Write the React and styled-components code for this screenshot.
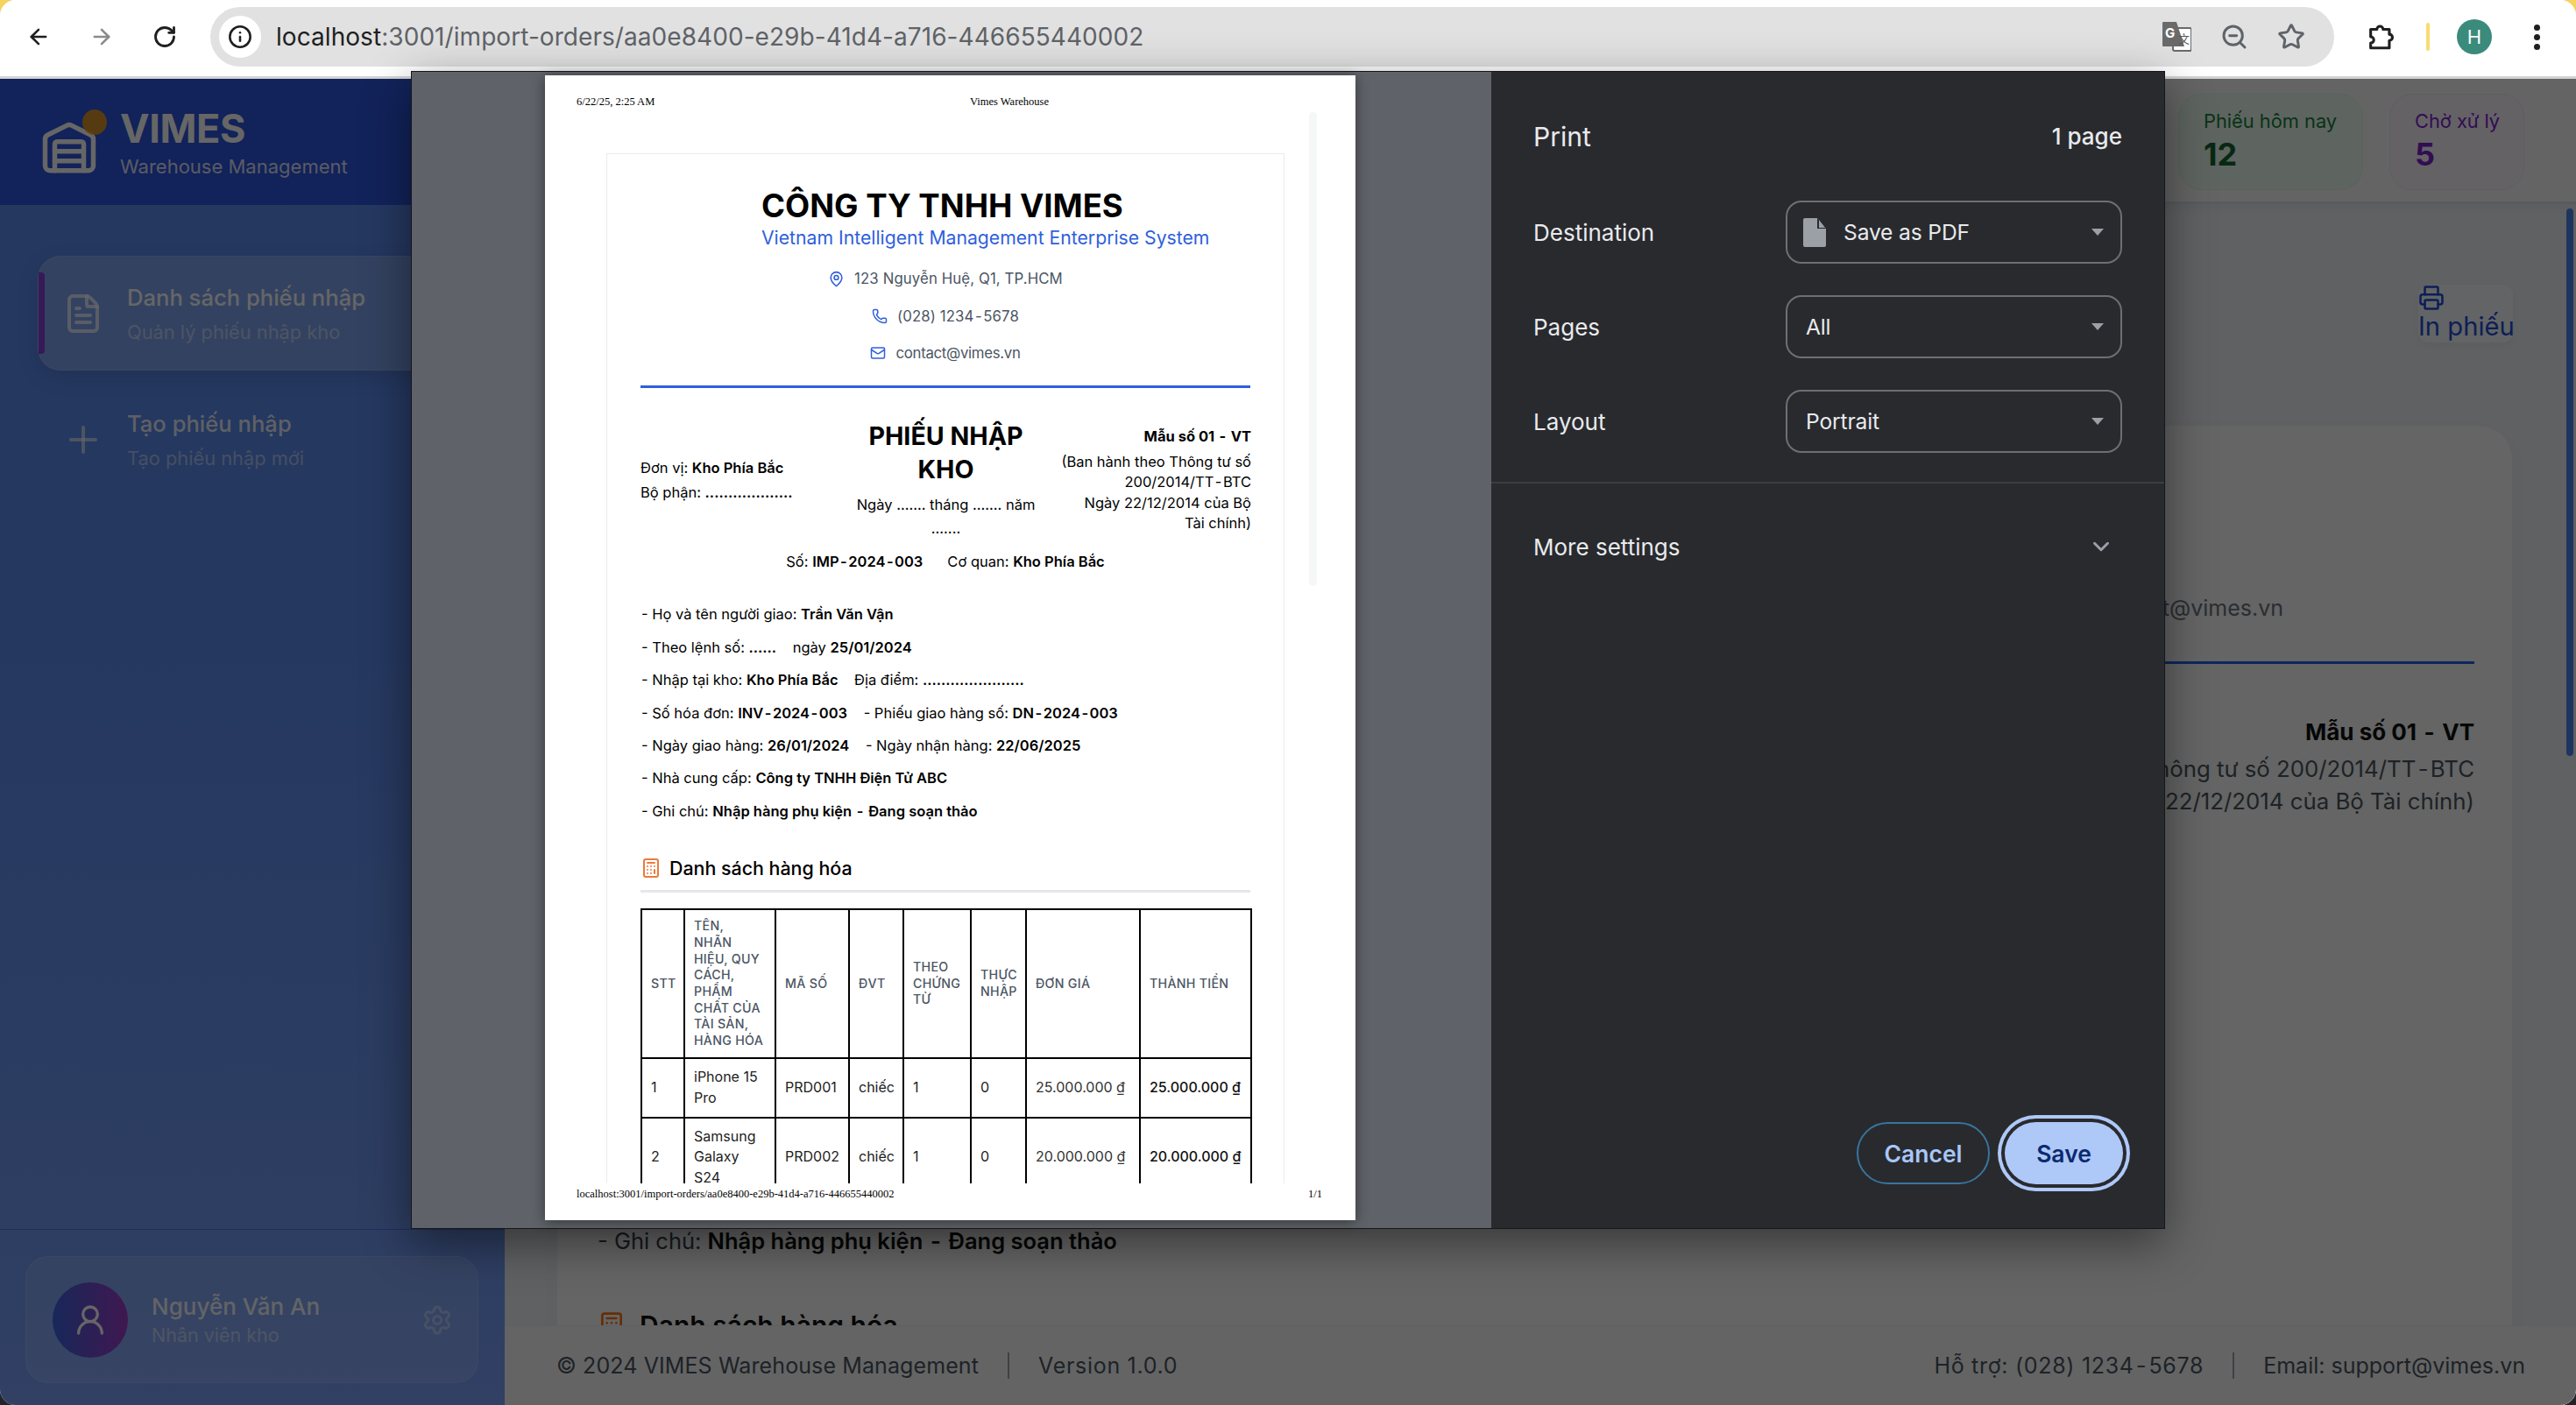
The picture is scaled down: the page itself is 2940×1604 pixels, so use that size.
import React from 'react';
import styled, { createGlobalStyle } from 'styled-components';
import { ArrowLeft, ArrowRight, RotateCw, Info, ZoomOut, Star, Warehouse, FileText, Plus, UserRound, Settings, Printer, MapPin, Phone, Mail, Calculator, ChevronDown } from 'lucide-react';

const Global = createGlobalStyle`
  html, body { margin: 0; padding: 0; background: linear-gradient(180deg, #f4d35e 0 50%, #23242a 50% 100%); }
  * { box-sizing: border-box; }
  body { font-family: Inter, "Noto Sans", sans-serif; }
`;

const Window = styled.div`
  position: relative; width: 2940px; height: 1604px; display: flex; flex-direction: column;
  overflow: hidden; border-radius: 18px; background: #fff;
`;

/* browser toolbar */
const BrowserBar = styled.header`
  height: 90px; flex: none; display: flex; align-items: flex-start; padding-top: 8px;
  background: #fff; border-bottom: 3px solid #d4d4d4;
`;
const NavIcons = styled.div`
  width: 240px; height: 68px; flex: none; display: flex; align-items: center; padding-left: 30px; gap: 44px;
  color: #1f1f1f;
`;
const Omnibox = styled.div`
  width: 2424px; height: 68px; flex: none; display: flex; align-items: center; padding-left: 10px;
  background: #e1e1e1; border-radius: 34px;
`;
const InfoDot = styled.span`
  width: 48px; height: 48px; border-radius: 50%; background: #fff; display: flex; align-items: center; justify-content: center; color: #1f1f1f; flex: none;
`;
const UrlText = styled.div`
  margin-left: 17px; font-size: 28px; color: #5f6368; letter-spacing: 0.06px; white-space: nowrap; flex: 1;
  b { font-weight: 400; color: #1f1f1f; }
`;
const OmniIcons = styled.div`
  display: flex; align-items: center; gap: 33px; padding-right: 33px; color: #5f6368;
`;
const ToolIcons = styled.div`
  flex: 1; height: 68px; display: flex; align-items: center; padding-left: 36px;
`;
const Divider = styled.span`
  width: 4px; height: 32px; background: #f8dc70; margin: 0 31px 0 35px; border-radius: 2px;
`;
const Profile = styled.span`
  width: 40px; height: 40px; border-radius: 50%; background: #3b8b7c; color: #fff; font-size: 22px;
  display: flex; align-items: center; justify-content: center;
`;
const Kebab = styled.span`
  margin-left: 48px; display: flex; flex-direction: column; gap: 4px;
  i { width: 7px; height: 7px; border-radius: 50%; background: #1f1f1f; display: block; }
`;

/* dimmed page */
const Viewport = styled.div`
  position: relative; flex: 1; display: flex; min-height: 0;
`;
const Scrim = styled.div`
  position: absolute; inset: 0; background: rgba(0,0,0,.6);
`;
const Sidebar = styled.aside`
  width: 576px; flex: none; display: flex; flex-direction: column;
  background: linear-gradient(180deg, #5c8cf0 0%, #5c8cf0 40%, #7aa0f8 100%);
`;
const Brand = styled.div`
  height: 144px; flex: none; display: flex; align-items: center; gap: 25px; padding: 0 0 4px 46px;
  background: linear-gradient(90deg, #2d55e0, #2e58e4); color: #fff;
`;
const LogoWrap = styled.div`
  position: relative; width: 66px; height: 62px; margin-top: 20px; flex: none; display: flex; align-items: center; justify-content: center;
`;
const LogoDot = styled.span`
  position: absolute; left: 48px; top: -14px; width: 28px; height: 29px; border-radius: 50%; background: #f59e0b; opacity: .85;
`;
const BrandName = styled.div`
  font-size: 45px; font-weight: 700; line-height: 60px; letter-spacing: -0.4px;
`;
const BrandSub = styled.div`
  font-size: 22px; line-height: 26px; color: rgba(255,255,255,.85);
`;
const Nav = styled.nav`
  padding: 58px 0 0 43px; display: flex; flex-direction: column; gap: 13px;
`;
const NavItem = styled.div`
  position: relative; width: 490px; height: 131px; display: flex; align-items: center; gap: 26px; padding-left: 27px;
  border-radius: 26px; color: #fff;
  background: ${p => p.$active ? 'rgba(255,255,255,.22)' : 'transparent'};
  border: ${p => p.$active ? '1px solid rgba(255,255,255,.15)' : '1px solid transparent'};
  box-shadow: ${p => p.$active ? '0 8px 24px rgba(0,0,0,.12)' : 'none'};
  ${p => p.$active ? `&::before { content: ''; position: absolute; left: 0; top: 18px; bottom: 18px; width: 7px; background: #8b3fd8; border-radius: 0 4px 4px 0; }` : ''}
  svg { color: rgba(255,255,255,${p => p.$active ? '.75' : '.6'}); flex: none; }
`;
const NavTitle = styled.div`
  font-size: 25.6px; font-weight: 500; line-height: 36px; color: ${p => p.$active ? '#fff' : 'rgba(255,255,255,.9)'};
`;
const NavSub = styled.div`
  font-size: 21.8px; line-height: 30px; margin-top: 6px; color: rgba(255,255,255,.5);
`;
const UserBlock = styled.div`
  margin-top: auto; height: 201px; padding: 30px 30px 0 29px; border-top: 1px solid rgba(40,80,220,.5);
`;
const UserCard = styled.div`
  height: 145px; display: flex; align-items: center; padding: 0 30px; gap: 27px;
  background: rgba(255,255,255,.12); border: 1px solid rgba(255,255,255,.12); border-radius: 26px; color: #fff;
`;
const Avatar = styled.div`
  width: 86px; height: 86px; border-radius: 50%; background: linear-gradient(90deg, #3b63e0, #a03cc8); display: flex; align-items: center; justify-content: center; flex: none;
`;
const UserName = styled.div`font-size: 26px; font-weight: 500; line-height: 34px; color: rgba(255,255,255,.95);`;
const UserRole = styled.div`font-size: 21.5px; line-height: 28px; margin-top: 1px; color: rgba(255,255,255,.5);`;
const Gear = styled.div`margin-left: auto; margin-right: -2px; color: rgba(255,255,255,.35); display: flex;`;

const Main = styled.main`
  flex: 1; min-width: 0; display: flex; flex-direction: column; background: #f1f3f8;
`;
const TopBar = styled.div`
  height: 143px; flex: none; display: flex; justify-content: flex-end; gap: 30px; padding: 17px 59px 0 0;
  background: #fbfbfb; border-bottom: 3px solid #dfe4ee; box-shadow: 0 4px 12px rgba(0,0,0,.06); position: relative;
`;
const Stat = styled.div`
  width: ${p => p.$w}px; height: 110px; padding: 16px 0 0 28px; border-radius: 26px;
  background: ${p => p.$bg}; border: 1px solid ${p => p.$bd};
`;
const StatLabel = styled.div`font-size: 21.8px; line-height: 28px; white-space: nowrap; color: ${p => p.$c};`;
const StatValue = styled.div`font-size: 36px; font-weight: 700; line-height: 44px; margin-top: 2px; color: ${p => p.$c};`;

const Body = styled.div`
  flex: 1; min-height: 0; overflow: hidden; position: relative; padding: 92px 72px 0 59px; display: flex; flex-direction: column;
`;
const ScrollThumb = styled.span`
  position: absolute; right: 3px; top: 5px; width: 8px; height: 625px; border-radius: 4px; background: #4b86f0;
`;
const PrintBtn = styled.div`
  align-self: flex-end; width: 108px; height: 71px; margin-bottom: 94px; border-radius: 12px; background: rgba(255,255,255,.5); color: #1d4ed8;
  box-shadow: 0 4px 12px rgba(0,0,0,.05);
  font-size: 29.2px; line-height: 36px; white-space: nowrap;
  svg { display: block; }
`;
const DocCard = styled.section`
  flex: 1; background: #fbfdfb; border: 1px solid #eef0f4; border-radius: 40px 40px 0 0; padding: 0 43px 0 46px; box-shadow: 0 8px 30px rgba(0,0,0,.04);
`;
const ContactBg = styled.div`
  text-align: right; padding: 192px 218px 0 0; font-size: 25px; line-height: 32px; color: #6b7280;
`;
const RuleBg = styled.div`height: 3px; margin-top: 45px; background: #2563eb;`;
const FormBg = styled.div`
  text-align: right; margin-top: 55px; font-size: 25.8px; line-height: 37px; color: #4b5563;
  b { display: block; font-size: 26px; color: #111; line-height: 46px; }
`;
const NoteBg = styled.div`
  margin-top: 467px; font-size: 25.5px; line-height: 34px; color: #374151;
  b { color: #111; font-weight: 600; }
`;
const SectionBg = styled.div`
  margin-top: 61px; display: flex; align-items: center; gap: 16px; font-size: 30px; font-weight: 600; color: #111;
  svg { color: #f97316; flex: none; }
`;
const Foot = styled.footer`
  height: 91px; flex: none; display: flex; align-items: center; padding: 0 58px 0 59px; background: #fbfbfa; border-top: 1px solid #eef0f3;
  font-size: 25px; color: #4b5563; position: relative;
`;
const FootText = styled.span`letter-spacing: ${p => p.$ls || 0}px;`;
const FootSep = styled.span`width: 2px; height: 30px; background: #9ca3af; margin: 0 33px;`;
const FootRight = styled.div`margin-left: auto; display: flex; align-items: center;`;
const Hy = styled.span`margin: 0 .09em;`;

/* print dialog */
const Dialog = styled.div`
  position: absolute; left: 469px; top: 81px; width: 2002px; height: 1322px; display: flex;
  border: 1px solid #16171a; background: #5f6368; box-shadow: 0 16px 50px rgba(0,0,0,.45);
`;
const Preview = styled.div`
  width: 1232px; flex: none; padding: 4px 0 0 152px; background: #5f6268;
`;
const Paper = styled.div`
  width: 925px; height: 1307px; background: #fff; display: flex; flex-direction: column; box-shadow: 0 2px 14px rgba(0,0,0,.45);
`;
const PrintHead = styled.div`
  height: 42px; flex: none; display: flex; align-items: flex-end; padding: 0 0 4px 36px;
  font-family: "Liberation Serif", serif; font-size: 12.5px; color: #000;
  span:first-child { width: 449px; }
`;
const PaperBody = styled.div`
  position: relative; height: 1223px; flex: none; overflow: hidden; padding: 47px 0 0 70px;
`;
const PaperScroll = styled.span`
  position: absolute; left: 872px; top: 0; width: 9px; height: 541px; border-radius: 5px; background: #f6f7f9;
`;
const Frame = styled.div`
  width: 774px; min-height: 1300px; border: 1.5px solid #e9ebee; border-bottom: 0; padding: 0 38px;
  color: #000; font-size: 16.5px;
`;
const CoName = styled.div`
  padding: 37px 0 0 138px; font-size: 36.6px; font-weight: 700; line-height: 44px; white-space: nowrap;
`;
const CoSub = styled.div`
  padding-left: 138px; font-size: 21.2px; line-height: 28px; color: #2f5fdc; white-space: nowrap;
`;
const Contacts = styled.div`
  margin-top: 22px; display: flex; flex-direction: column; gap: 20.5px; align-items: center; color: #4b5563; font-size: 16.8px;
`;
const ContactRow = styled.div`
  height: 22px; display: flex; align-items: center; gap: 11px; letter-spacing: ${p => p.$ls ?? 0.1}px;
  svg { color: #2f5fdc; flex: none; }
`;
const BlueRule = styled.div`height: 3.4px; margin-top: 26px; background: #2f5fdc;`;
const FormGrid = styled.div`
  margin-top: 36px; display: grid; grid-template-columns: 232px 233px 232px; align-items: center;
`;
const FormLeft = styled.div`
  line-height: 28px; b { font-weight: 600; }
`;
const FormCenter = styled.div`
  text-align: center;
`;
const FormTitle = styled.div`font-size: 28.6px; font-weight: 700; line-height: 38px;`;
const FormDate = styled.div`margin-top: 8px; line-height: 27px;`;
const FormRight = styled.div`
  text-align: right; line-height: 23.4px; white-space: nowrap;
  b { display: block; font-weight: 700; margin-bottom: 5px; font-size: 16.5px; }
`;
const RefRow = styled.div`
  margin-top: 12px; display: flex; justify-content: center; gap: 28px; line-height: 24px;
  b { font-weight: 600; }
`;
const InfoList = styled.div`
  margin-top: 36px; display: flex; flex-direction: column; gap: 13.4px; padding-left: 1px; line-height: 24px;
  b { font-weight: 600; }
`;
const SectionTitle = styled.div`
  margin-top: 39px; display: flex; align-items: center; gap: 9px; height: 28px; font-size: 21.4px; font-weight: 500;
  svg { color: #ea7a3c; flex: none; }
`;
const GrayRule = styled.div`height: 3px; margin-top: 11px; background: #e5e7eb;`;
const GoodsTable = styled.table`
  margin-top: 18px; width: 696px; table-layout: fixed; border-collapse: collapse; border: 2px solid #000;
  th, td { border: 2px solid #000; text-align: left; vertical-align: middle; white-space: pre-line; }
  th { font-size: 14.2px; font-weight: 500; line-height: 18.65px; color: #4b5563; padding: 9.5px 2px 9.5px 10px; letter-spacing: 0.3px; }
  td { font-size: 16px; line-height: 23.3px; color: #222; padding: 9.5px 2px 9.5px 10px; }
  td.money { white-space: nowrap; color: #333; }
  td.strong { font-weight: 500; color: #111; }
`;
const PrintFoot = styled.div`
  flex: 1; display: flex; justify-content: space-between; padding: 5px 38px 0 36px;
  font-family: "Liberation Serif", serif; font-size: 12.5px; color: #000;
`;
const Panel = styled.div`
  flex: 1; display: flex; flex-direction: column; background: #292a2e; color: #e8eaed; font-size: 26px; position: relative;
`;
const PanelHead = styled.div`
  height: 147px; flex: none; display: flex; justify-content: space-between; align-items: center; padding: 0 48px;
`;
const PanelTitle = styled.div`font-size: 30px;`;
const PageCount = styled.div`font-weight: 500; font-size: 26px;`;
const Settings2 = styled.div`
  padding: 0 48px; display: flex; flex-direction: column; gap: 36px;
`;
const Row = styled.div`display: flex; align-items: center; justify-content: space-between;`;
const Select = styled.div`
  width: 384px; height: 72px; display: flex; align-items: center; padding: 0 19px 0 21px; border: 2px solid #6d6f73; border-radius: 18px; font-size: 24.6px; letter-spacing: -0.15px;
  &::after { content: ''; margin-left: auto; border-left: 7px solid transparent; border-right: 7px solid transparent; border-top: 8px solid #9aa0a6; }
  svg { margin-right: 20px; margin-left: -3px; }
`;
const PanelRule = styled.div`height: 2px; margin-top: 33px; background: #3c3d41;`;
const More = styled.div`
  height: 144px; display: flex; align-items: center; justify-content: space-between; padding: 0 48px;
  svg { color: #9aa0a6; margin-right: 9px; }
`;
const Actions = styled.div`
  margin-top: auto; margin-bottom: 50px; padding-right: 47px; display: flex; justify-content: flex-end; gap: 17px;
`;
const Btn = styled.div`
  height: 71px; width: ${p => p.$w}px; display: flex; align-items: center; justify-content: center; border-radius: 36px; font-size: 26.5px; font-weight: 600;
  color: ${p => p.$primary ? '#0b2a6e' : '#a8c7fa'};
  background: ${p => p.$primary ? '#aec8f8' : 'transparent'};
  border: ${p => p.$primary ? 'none' : '2px solid #38759f'};
  box-shadow: ${p => p.$primary ? '0 0 0 4px #292a2e, 0 0 0 8px #aec8f8' : 'none'};
`;

const PuzzleIcon = () => (
  <svg width="34" height="36" viewBox="0 0 24 24" fill="none" stroke="#1f1f1f" strokeWidth="2.2" strokeLinejoin="round">
    <path d="M4 6h5a2.5 2.5 0 0 1 5 0h5v4a2.5 2.5 0 0 1 0 5v6H4v-4a2.5 2.5 0 0 0 0-5V6z" />
  </svg>
);
const TranslateIcon = () => (
  <svg width="33" height="34" viewBox="0 0 33 34">
    <rect x="12" y="7" width="21" height="26" rx="2" fill="#fff" stroke="#6a6a6a" strokeWidth="2" />
    <path d="M1 0h15l9 28H1a1 1 0 0 1-1-1V1a1 1 0 0 1 1-1z" fill="#6a6a6a" />
    <text x="3" y="18" fontFamily="Inter, sans-serif" fontSize="15" fontWeight="700" fill="#fff">G</text>
    <text x="18" y="24" fontFamily="'Noto Sans CJK SC', sans-serif" fontSize="13" fill="#5a5a5a">文</text>
  </svg>
);
const DocGlyph = () => (
  <svg width="26" height="33" viewBox="0 0 26 33"><path d="M2 0h14l10 12v19a2 2 0 0 1-2 2H2a2 2 0 0 1-2-2V2a2 2 0 0 1 2-2z" fill="#9aa0a6" /><path d="M16 0l10 12H16z" fill="#292a2e" /><path d="M18 2l7 9h-7z" fill="#9aa0a6" /></svg>
);

/* the reference's font sets hyphens wider than Inter does */
const Sp = ({ t }) => t.split('-').map((part, i) => (
  <React.Fragment key={i}>{i > 0 && <Hy>-</Hy>}{part}</React.Fragment>
));

const headers = ['STT', 'TÊN,\nNHÃN\nHIỆU, QUY\nCÁCH,\nPHẨM\nCHẤT CỦA\nTÀI SẢN,\nHÀNG HÓA', 'MÃ SỐ', 'ĐVT', 'THEO\nCHỨNG\nTỪ', 'THỰC\nNHẬP', 'ĐƠN GIÁ', 'THÀNH TIỀN'];
const widths = [49, 104, 84, 62, 77, 63, 130, 127];
const items = [
  ['1', 'iPhone 15\nPro', 'PRD001', 'chiếc', '1', '0', '25.000.000 ₫', '25.000.000 ₫'],
  ['2', 'Samsung\nGalaxy\nS24', 'PRD002', 'chiếc', '1', '0', '20.000.000 ₫', '20.000.000 ₫'],
];

export default function App() {
  return (
    <>
      <Global />
      <Window>
        <BrowserBar>
          <NavIcons>
            <ArrowLeft size={28} strokeWidth={2.2} />
            <ArrowRight size={28} strokeWidth={2.2} color="#8a8a8a" />
            <RotateCw size={28} strokeWidth={2.4} />
          </NavIcons>
          <Omnibox>
            <InfoDot><Info size={28} strokeWidth={2.2} /></InfoDot>
            <UrlText><b>localhost</b>:3001/import-orders/aa0e8400-e29b-41d4-a716-446655440002</UrlText>
            <OmniIcons>
              <TranslateIcon />
              <ZoomOut size={32} strokeWidth={2.2} />
              <Star size={32} strokeWidth={2.2} />
            </OmniIcons>
          </Omnibox>
          <ToolIcons>
            <PuzzleIcon />
            <Divider />
            <Profile>H</Profile>
            <Kebab><i /><i /><i /></Kebab>
          </ToolIcons>
        </BrowserBar>

        <Viewport>
          <Sidebar>
            <Brand>
              <LogoWrap><Warehouse size={76} strokeWidth={2} /><LogoDot /></LogoWrap>
              <div>
                <BrandName>VIMES</BrandName>
                <BrandSub>Warehouse Management</BrandSub>
              </div>
            </Brand>
            <Nav>
              <NavItem $active>
                <FileText size={48} strokeWidth={2} />
                <div>
                  <NavTitle $active>Danh sách phiếu nhập</NavTitle>
                  <NavSub>Quản lý phiếu nhập kho</NavSub>
                </div>
              </NavItem>
              <NavItem>
                <Plus size={48} strokeWidth={2} />
                <div>
                  <NavTitle>Tạo phiếu nhập</NavTitle>
                  <NavSub>Tạo phiếu nhập mới</NavSub>
                </div>
              </NavItem>
            </Nav>
            <UserBlock>
              <UserCard>
                <Avatar><UserRound size={40} color="#fff" strokeWidth={2} /></Avatar>
                <div>
                  <UserName>Nguyễn Văn An</UserName>
                  <UserRole>Nhân viên kho</UserRole>
                </div>
                <Gear><Settings size={36} strokeWidth={2} /></Gear>
              </UserCard>
            </UserBlock>
          </Sidebar>
          <Main>
            <TopBar>
              <Stat $w={211} $bg="#ecfbef" $bd="#dcf5e2">
                <StatLabel $c="#16803c">Phiếu hôm nay</StatLabel>
                <StatValue $c="#166534">12</StatValue>
              </Stat>
              <Stat $w={154} $bg="#faf5fc" $bd="#f1e6f8">
                <StatLabel $c="#7e22ce">Chờ xử lý</StatLabel>
                <StatValue $c="#7e22ce">5</StatValue>
              </Stat>
            </TopBar>
            <Body>
              <ScrollThumb />
              <PrintBtn>
                <Printer size={30} strokeWidth={2} />
                In phiếu
              </PrintBtn>
              <DocCard>
                <ContactBg>contact@vimes.vn</ContactBg>
                <RuleBg />
                <FormBg>
                  <b><Sp t="Mẫu số 01 - VT" /></b>
                  (Ban hành theo Thông tư số <Sp t="200/2014/TT-BTC" />
                  <br />
                  Ngày 22/12/2014 của Bộ Tài chính)
                </FormBg>
                <NoteBg>- Ghi chú: <b><Sp t="Nhập hàng phụ kiện - Đang soạn thảo" /></b></NoteBg>
                <SectionBg><Calculator size={32} strokeWidth={2} />Danh sách hàng hóa</SectionBg>
              </DocCard>
            </Body>
            <Foot>
              <FootText $ls={0.1}>© 2024 VIMES Warehouse Management</FootText>
              <FootSep />
              <FootText $ls={0.7}>Version 1.0.0</FootText>
              <FootRight>
                <FootText $ls={0.7}>Hỗ trợ: (028) <Sp t="1234-5678" /></FootText>
                <FootSep />
                <FootText>Email: support@vimes.vn</FootText>
              </FootRight>
            </Foot>
          </Main>
          <Scrim />
        </Viewport>

        <Dialog>
          <Preview>
            <Paper>
              <PrintHead><span>6/22/25, 2:25 AM</span><span>Vimes Warehouse</span></PrintHead>
              <PaperBody>
                <PaperScroll />
                <Frame>
                  <CoName>CÔNG TY TNHH VIMES</CoName>
                  <CoSub>Vietnam Intelligent Management Enterprise System</CoSub>
                  <Contacts>
                    <ContactRow><MapPin size={19} strokeWidth={2} />123 Nguyễn Huệ, Q1, TP.HCM</ContactRow>
                    <ContactRow><Phone size={18} strokeWidth={2} /><span>(028) <Sp t="1234-5678" /></span></ContactRow>
                    <ContactRow $ls={-0.3}><Mail size={18} strokeWidth={2} />contact@vimes.vn</ContactRow>
                  </Contacts>
                  <BlueRule />
                  <FormGrid>
                    <FormLeft>
                      <div>Đơn vị: <b>Kho Phía Bắc</b></div>
                      <div>Bộ phận: <b>...................</b></div>
                    </FormLeft>
                    <FormCenter>
                      <FormTitle>PHIẾU NHẬP<br />KHO</FormTitle>
                      <FormDate>Ngày ....... tháng ....... năm<br />.......</FormDate>
                    </FormCenter>
                    <FormRight>
                      <b><Sp t="Mẫu số 01 - VT" /></b>
                      (Ban hành theo Thông tư số<br />
                      <Sp t="200/2014/TT-BTC" /><br />
                      Ngày 22/12/2014 của Bộ<br />
                      Tài chính)
                    </FormRight>
                  </FormGrid>
                  <RefRow>
                    <span>Số: <b><Sp t="IMP-2024-003" /></b></span>
                    <span>Cơ quan: <b>Kho Phía Bắc</b></span>
                  </RefRow>
                  <InfoList>
                    <div>- Họ và tên người giao: <b>Trần Văn Vận</b></div>
                    <div>- Theo lệnh số: <b>......</b> &nbsp;&nbsp; ngày <b>25/01/2024</b></div>
                    <div>- Nhập tại kho: <b>Kho Phía Bắc</b> &nbsp;&nbsp; Địa điểm: <b>......................</b></div>
                    <div>- Số hóa đơn: <b><Sp t="INV-2024-003" /></b> &nbsp;&nbsp; - Phiếu giao hàng số: <b><Sp t="DN-2024-003" /></b></div>
                    <div>- Ngày giao hàng: <b>26/01/2024</b> &nbsp;&nbsp; - Ngày nhận hàng: <b>22/06/2025</b></div>
                    <div>- Nhà cung cấp: <b>Công ty TNHH Điện Tử ABC</b></div>
                    <div>- Ghi chú: <b><Sp t="Nhập hàng phụ kiện - Đang soạn thảo" /></b></div>
                  </InfoList>
                  <SectionTitle><Calculator size={24} strokeWidth={2} />Danh sách hàng hóa</SectionTitle>
                  <GrayRule />
                  <GoodsTable>
                    <colgroup>{widths.map((w, i) => <col key={i} style={{ width: w }} />)}</colgroup>
                    <thead><tr>{headers.map(h => <th key={h}>{h}</th>)}</tr></thead>
                    <tbody>
                      {items.map(r => (
                        <tr key={r[0]}>
                          {r.map((c, i) => <td key={i} className={i === 6 ? 'money' : i === 7 ? 'money strong' : undefined}>{c}</td>)}
                        </tr>
                      ))}
                    </tbody>
                  </GoodsTable>
                </Frame>
              </PaperBody>
              <PrintFoot><span>localhost:3001/import-orders/aa0e8400-e29b-41d4-a716-446655440002</span><span>1/1</span></PrintFoot>
            </Paper>
          </Preview>
          <Panel>
            <PanelHead><PanelTitle>Print</PanelTitle><PageCount>1 page</PageCount></PanelHead>
            <Settings2>
              <Row><span>Destination</span><Select><DocGlyph />Save as PDF</Select></Row>
              <Row><span>Pages</span><Select>All</Select></Row>
              <Row><span>Layout</span><Select>Portrait</Select></Row>
            </Settings2>
            <PanelRule />
            <More><span>More settings</span><ChevronDown size={30} strokeWidth={2.4} /></More>
            <Actions>
              <Btn $w={152}>Cancel</Btn>
              <Btn $w={135} $primary>Save</Btn>
            </Actions>
          </Panel>
        </Dialog>
      </Window>
    </>
  );
}
